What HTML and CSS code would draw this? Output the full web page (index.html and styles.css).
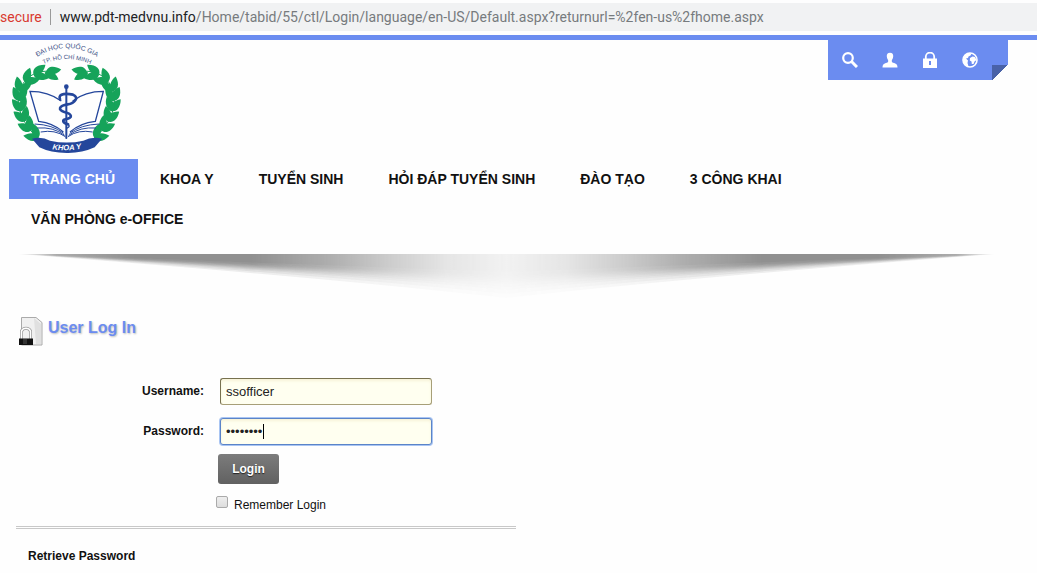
FILE: index.html
```html
<!DOCTYPE html>
<html lang="vi">
<head>
<meta charset="utf-8">
<meta name="viewport" content="width=device-width, initial-scale=1">
<title>User Log In</title>
<link rel="stylesheet" href="styles.css">
</head>
<body>
<div class="address-bar">
  <span class="address-status">secure</span>
  <span class="address-url"><b class="address-host">www.pdt-medvnu.info</b>/Home/tabid/55/ctl/Login/language/en-US/Default.aspx?returnurl=%2fen-us%2fhome.aspx</span>
</div>
<div class="page">
  <header class="header">
    <a class="logo" href="#" aria-label="Khoa Y">
      <svg viewBox="27 16 354 336" width="118" height="112">
        <defs>
          <path id="leaf" d="M0 0C4-17 24-21 46-5C32 10 10 13 0 0z"/>
          <g id="wreath" fill="#16a35a">
            <path d="M118 306C60 262 34 180 74 134Q98 103 145 103" fill="none" stroke="#16a35a" stroke-width="3"/>
            <use href="#leaf" transform="translate(116 302) rotate(-168)"/><use href="#leaf" transform="translate(116 302) rotate(-108)"/>
            <use href="#leaf" transform="translate(95 280) rotate(-150)"/><use href="#leaf" transform="translate(92 282) rotate(-90)"/>
            <use href="#leaf" transform="translate(78 252) rotate(-138)"/><use href="#leaf" transform="translate(74 254) rotate(-76)"/>
            <use href="#leaf" transform="translate(67 222) rotate(-126)"/><use href="#leaf" transform="translate(62 224) rotate(-64)"/>
            <use href="#leaf" transform="translate(61 192) rotate(-112)"/><use href="#leaf" transform="translate(56 194) rotate(-50)"/>
            <use href="#leaf" transform="translate(62 164) rotate(-98)"/><use href="#leaf" transform="translate(60 166) rotate(-34)"/>
            <use href="#leaf" transform="translate(76 137) rotate(-66)"/><use href="#leaf" transform="translate(74 139) rotate(-8)"/>
            <use href="#leaf" transform="translate(101 114) rotate(-34)"/><use href="#leaf" transform="translate(101 116) rotate(16)"/>
            <use href="#leaf" transform="translate(138 107) rotate(-4)"/><use href="#leaf" transform="translate(134 108) rotate(32)"/>
          </g>
          <path id="arc-top" d="M100 68Q200 0 302 68"/>
          <path id="arc-mid" d="M126 84Q200 50 276 84"/>
          <path id="arc-band" d="M147 336Q200 347 254 334"/>
        </defs>
        <use href="#wreath"/>
        <use href="#wreath" transform="translate(398 0) scale(-1 1)"/>
        <g fill="none" stroke="#24469b" stroke-width="4">
          <path d="M184 193Q145 164 90 164L116 254Q160 259 190 286M218 193Q255 164 310 164L286 254Q240 259 210 286"/>
          <path d="M104 262Q158 264 191 290M112 274Q160 270 194 296M122 286Q165 278 196 300M298 262Q242 264 209 290M288 274Q240 270 206 296M278 286Q235 278 204 300" stroke-width="3"/>
        </g>
        <g fill="none" stroke="#24469b" stroke-linecap="round">
          <path d="M199 150V304" stroke-width="6"/>
          <path d="M180 188C172 168 204 171 219 174C239 182 224 200 203 203C176 207 173 220 193 226C218 232 218 244 199 247C185 249 187 258 204 263" stroke-width="8"/>
          <path d="M204 263Q212 268 202 274" stroke-width="4"/>
        </g>
        <circle cx="199" cy="150" r="7" fill="#24469b"/>
        <path d="M96 306Q126 299 150 312Q200 323 250 312Q276 299 306 306L284 332Q245 350 200 349Q152 349 118 332z" fill="#24469b"/>
        <g class="logo-text">
          <text class="logo-ring" font-size="20"><textPath href="#arc-top" startOffset="50%" text-anchor="middle">ĐẠI HỌC QUỐC GIA</textPath></text>
          <text class="logo-ring" font-size="18"><textPath href="#arc-mid" startOffset="50%" text-anchor="middle">TP. HỒ CHÍ MINH</textPath></text>
          <text class="logo-band" font-size="23"><textPath href="#arc-band" startOffset="50%" text-anchor="middle">KHOA Y</textPath></text>
        </g>
      </svg>
    </a>
    <div class="tools">
      <button class="tool" type="button" aria-label="Search"><svg viewBox="0 0 16 16"><circle cx="6" cy="6" r="4.800" fill="none" stroke="#fff" stroke-width="2.200"/><path d="M9.500 9.500L15 15" stroke="#fff" stroke-width="3"/></svg></button>
      <button class="tool" type="button" aria-label="Account"><svg viewBox="0 0 16 16"><path fill="#fff" d="M8 .8c2.400 0 3.400 1.600 3.200 3.800C11 6.800 10 7.600 9.800 8.500c-.2 1.800.5 2 2.400 2.600 2.300.8 3.300 1.800 3.300 4.300H.5c0-2.500 1-3.500 3.300-4.300 1.900-.6 2.600-.8 2.400-2.600C6 7.600 5 6.800 4.800 4.600 4.600 2.400 5.600.8 8 .8z"/></svg></button>
      <button class="tool" type="button" aria-label="Login"><svg viewBox="0 0 16 16"><path d="M3.800 7V4.800a4.200 4.200 0 0 1 8.400 0V7" fill="none" stroke="#fff" stroke-width="1.800"/><path fill="#fff" fill-rule="evenodd" d="M1 6.500h14V16H1zM7 9v4h2V9z"/></svg></button>
      <button class="tool" type="button" aria-label="Language"><svg viewBox="0 0 16 16"><circle cx="8" cy="8" r="7" fill="none" stroke="#fff" stroke-width="1.600"/><path fill="#fff" d="M1 7L3 3 6.500 1 9.500 1.500 8.500 3.500 6.500 4.500 6 6 4 6.500 6 8.500 5.500 11 6.500 14.500 3.500 13.500 1.500 10.500zM8 6L10.500 4.500 13 5 14.500 8 12.500 9.500 11.500 12 9.800 12 9.500 9.500 7.800 8.500z"/></svg></button>
    </div>
  </header>
  <nav class="nav">
    <a class="nav-link nav-active" href="#">TRANG CHỦ</a>
    <a class="nav-link" href="#">KHOA Y</a>
    <a class="nav-link" href="#">TUYỂN SINH</a>
    <a class="nav-link" href="#">HỎI ĐÁP TUYỂN SINH</a>
    <a class="nav-link" href="#">ĐÀO TẠO</a>
    <a class="nav-link" href="#">3 CÔNG KHAI</a>
    <a class="nav-link" href="#">VĂN PHÒNG e-OFFICE</a>
  </nav>
  <svg class="shadow" viewBox="0 0 970 50" preserveAspectRatio="none" aria-hidden="true">
    <defs>
      <linearGradient id="fade">
        <stop offset="0" stop-color="#fff" stop-opacity="0"/>
        <stop offset=".04" stop-color="#fff" stop-opacity=".75"/>
        <stop offset=".12" stop-color="#fff"/>
        <stop offset=".24" stop-color="#fff"/>
        <stop offset=".32" stop-color="#fff" stop-opacity=".72"/>
        <stop offset=".38" stop-color="#fff" stop-opacity=".45"/>
        <stop offset=".44" stop-color="#fff" stop-opacity=".22"/>
        <stop offset=".5" stop-color="#fff" stop-opacity=".11"/>
        <stop offset=".56" stop-color="#fff" stop-opacity=".22"/>
        <stop offset=".62" stop-color="#fff" stop-opacity=".45"/>
        <stop offset=".68" stop-color="#fff" stop-opacity=".72"/>
        <stop offset=".76" stop-color="#fff"/>
        <stop offset=".88" stop-color="#fff"/>
        <stop offset=".96" stop-color="#fff" stop-opacity=".75"/>
        <stop offset="1" stop-color="#fff" stop-opacity="0"/>
      </linearGradient>
      <mask id="fade-mask"><rect width="970" height="50" fill="url(#fade)"/></mask>
    </defs>
    <g mask="url(#fade-mask)" fill="#555" fill-opacity=".1">
      <path d="M0 0Q300 11 485 18Q670 11 970 0z"/>
      <path d="M0 0Q300 13 485 22Q670 13 970 0z"/>
      <path d="M0 0Q300 14 485 24Q670 14 970 0z"/>
      <path d="M0 0Q300 15 485 26Q670 15 970 0z"/>
      <path d="M0 0Q300 16 485 28Q670 16 970 0z"/>
      <path d="M0 0Q300 17 485 30Q670 17 970 0z"/>
      <path d="M0 0Q300 18 485 33Q670 18 970 0z"/>
      <path d="M0 0Q300 19 485 36Q670 19 970 0z"/>
      <path d="M0 0Q300 21 485 40Q670 21 970 0z"/>
      <path d="M0 0Q300 23 485 44Q670 23 970 0z"/>
    </g>
  </svg>
  <main class="login">
    <h1 class="login-title">
      <svg width="26" height="30" viewBox="0 0 26 30" aria-hidden="true">
        <path d="M3.500 1.500H18l6 5V29H3.500z" fill="#f0f0f0" stroke="#aaa"/>
        <path d="M16 2l7 6v20h-5z" fill="#e0e0e0"/>
        <path d="M3.500 23v-8a5 5 0 0 1 9 0v8" fill="none" stroke="#999" stroke-width="3"/>
        <path d="M3.500 23v-8a5 5 0 0 1 9 0v8" fill="none" stroke="#fff" stroke-width="1.500"/>
        <path d="M1 22.500h14V29H1z" fill="#111"/>
        <path d="M5 23h4v5H5z" fill="#333"/>
      </svg>
      <span>User Log In</span>
    </h1>
    <form class="form">
      <label class="form-label" for="username">Username:</label>
      <input class="field" id="username" type="text" value="ssofficer">
      <label class="form-label" for="password">Password:</label>
      <span class="field-wrap"><input class="field field-focus" id="password" type="password" value="password"><span class="caret"></span></span>
      <div class="actions">
        <button class="submit" type="button">Login</button>
        <label class="remember" for="remember"><input class="checkbox" id="remember" type="checkbox"><span>Remember Login</span></label>
      </div>
    </form>
    <div class="links"><a class="retrieve" href="#">Retrieve Password</a></div>
  </main>
</div>
</body>
</html>
```
FILE: styles.css
```css
* { box-sizing: border-box; }
body {
  margin: 0;
  background: #fefefe;
  color: #111;
  font-family: "Liberation Sans", Arial, sans-serif;
  font-size: 12px;
}
a { color: inherit; text-decoration: none; }
button { padding: 0; border: 0; font-family: inherit; }

.address-bar {
  display: flex;
  align-items: center;
  height: 28px;
  margin: 3px 0 4px;
  background: #f1f2f3;
  font-family: Roboto, "Open Sans", sans-serif;
  font-size: 14px;
  white-space: nowrap;
}
.address-status {
  padding-right: 8px;
  border-right: 1px solid #999;
  color: #d93a30;
  line-height: 16px;
}
.address-url { padding-left: 9px; color: #777b7e; }
.address-host { color: #202124; font-weight: 400; }

.page {
  border-top: 5px solid #6b8cf0;
  padding: 0 29px 0 9px;
}
.header { display: flex; justify-content: space-between; align-items: flex-start; }
.logo { padding: 2px 0 5px; }
.logo svg { display: block; }
.logo-ring { fill: #3d5186; }
.logo-band { fill: #fff; font-weight: 700; font-style: italic; }
.tools {
  position: relative;
  display: flex;
  align-items: center;
  gap: 24px;
  height: 40px;
  padding: 0 30px 0 14px;
  background: #6b8cf0;
}
.tools::after {
  content: "";
  position: absolute;
  right: 0;
  bottom: 0;
  width: 16px;
  height: 15px;
  background: linear-gradient(to bottom right, #4962a8 50%, #fefefe 50%);
}
.tool { width: 16px; height: 16px; background: none; }
.tool svg { display: block; width: 16px; height: 16px; }

.nav { display: flex; flex-wrap: wrap; max-width: 960px; }
.nav-link {
  padding: 0 23px 0 22px;
  font-size: 14px;
  font-weight: 700;
  line-height: 40px;
}
.nav-active { background: #6b8cf0; color: #fff; }

.shadow { display: block; width: 98%; height: 50px; margin: 15px 0 0 8px; }

.login { max-width: 507px; padding: 12px 0 0 7px; }
.login-title {
  display: flex;
  align-items: center;
  gap: 4px;
  margin: 0 0 32px 2px;
  color: #6b8cf0;
  font-size: 16px;
  line-height: 30px;
  text-shadow: 1px 1px 2px #bbb;
}
.login-title span { margin-top: -6px; }
.form {
  display: grid;
  grid-template-columns: 188px 212px;
  column-gap: 16px;
  row-gap: 13px;
}
.form-label { font-weight: 700; line-height: 26px; text-align: right; }
.field {
  display: block;
  width: 100%;
  height: 27px;
  padding: 0 5px;
  border: 1px solid #a79f78;
  border-top-color: #77714f;
  border-left-color: #77714f;
  border-radius: 3px;
  outline: 0;
  background: #fffff0;
  box-shadow: inset 0 2px 3px #f7f3d8;
  color: #222;
  font: 13px "Liberation Sans", Arial, sans-serif;
}
.field-wrap { position: relative; }
.field-focus { border-color: #5b84c8; box-shadow: 0 0 0 1px #a9c5f3, inset 0 2px 3px #f7f3d8; }
.caret { position: absolute; left: 43px; top: 6px; width: 1px; height: 15px; background: #000; }
.actions { grid-column: 2; margin: -4px 0 0 -2px; }
.submit {
  display: block;
  width: 61px;
  height: 30px;
  border-radius: 3px;
  background: linear-gradient(#7c7c7c, #616161);
  color: #fff;
  font-size: 12px;
  font-weight: 700;
  text-shadow: 0 1px 1px #222;
}
.remember { display: flex; gap: 6px; margin: 12px 0 12px -2px; line-height: 18px; }
.checkbox {
  appearance: none;
  width: 12px;
  height: 12px;
  margin: 0;
  border: 1px solid #aaa;
  border-radius: 2px;
  background: linear-gradient(#eee, #ddd);
}
.links { border-top: 3px double #c8c8c8; padding: 20px 12px 11px; line-height: 14px; }
.retrieve { font-weight: 700; }
```
